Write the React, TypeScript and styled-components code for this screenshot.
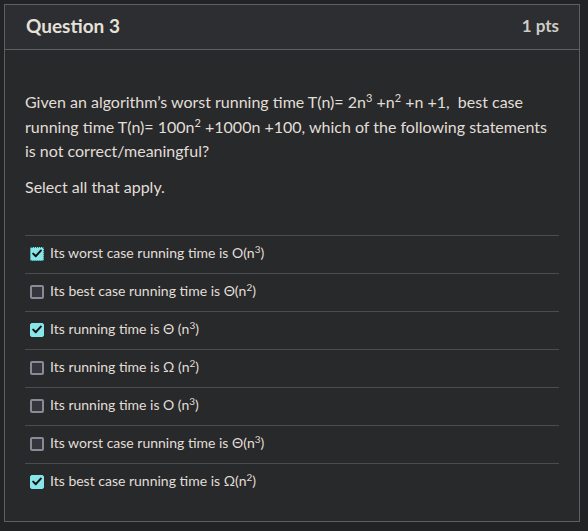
import React from "react";
import styled, { createGlobalStyle } from "styled-components";

const Global = createGlobalStyle`
  html, body { margin: 0; padding: 0; background: #222325; }
  body { font-family: Lato, "Open Sans", sans-serif; color: #e1ded7; }
  * { box-sizing: border-box; }
`;

const Page = styled.div`
  padding: 4px 8px 9px 4px;
  width: 588px;
  height: 531px;
`;

const Card = styled.section`
  width: 576px;
  border: 1px solid #5e5f62;
  background: #28292b;
`;

const Header = styled.header`
  height: 45px;
  display: flex;
  align-items: center;
  justify-content: space-between;
  padding: 0 20px 3px 21px;
  background: #2d2e31;
  border-bottom: 1px solid #5e5f62;
`;

const Title = styled.h2`
  margin: 0;
  font-size: 19px;
  font-weight: 700;
  color: #e4e1da;
`;

const Points = styled.span`
  font-size: 17px;
  font-weight: 700;
  color: #cfccc5;
`;

const Body = styled.div`
  padding: 40px 20px 20px 20px;
`;

const Para = styled.p<{ $gap?: number }>`
  margin: 0 0 ${(p) => p.$gap ?? 0}px 0;
  font-size: 16px;
  line-height: 24.5px;
`;

const Sup = styled.sup<{ $small?: boolean }>`
  font-size: ${(p) => (p.$small ? 10 : 11)}px;
  line-height: 0;
  vertical-align: ${(p) => (p.$small ? 5 : 6)}px;
`;

const List = styled.div`
  display: flex;
  flex-direction: column;
`;

const Row = styled.label`
  height: 38px;
  display: flex;
  align-items: center;
  gap: 6px;
  padding: 0 0 2px 5px;
  border-top: 1px solid #4c4d50;
`;

const Box = styled.span<{ $checked: boolean; $focus?: boolean }>`
  width: 14px;
  height: 14px;
  border-radius: 2px;
  display: flex;
  align-items: center;
  justify-content: center;
  flex: none;
  background: ${(p) => (p.$checked ? "#86e6e9" : "#35363d")};
  border: ${(p) =>
    p.$checked
      ? p.$focus
        ? "1px dotted #2a6c70"
        : "1px solid #86e6e9"
      : "2px solid #8a8a96"};
`;

const AnswerText = styled.span`
  font-size: 14px;
  color: #e1ded7;
  margin-bottom: 2px;
`;

const Check = () => (
  <svg width="10" height="9" viewBox="0 0 10 9">
    <path d="M1.2 4.6 L3.8 7.2 L8.8 1.6" fill="none" stroke="#111" strokeWidth="2" strokeLinecap="round" strokeLinejoin="round" />
  </svg>
);

type Answer = { pre: string; sup: string; post: string; checked: boolean; focus?: boolean };

const answers: Answer[] = [
  { pre: "Its worst case running time is O(n", sup: "3", post: ")", checked: true, focus: true },
  { pre: "Its best case running time is \u0398(n", sup: "2", post: ")", checked: false },
  { pre: "Its running time is \u0398 (n", sup: "3", post: ")", checked: true },
  { pre: "Its running time is \u03A9 (n", sup: "2", post: ")", checked: false },
  { pre: "Its running time is O (n", sup: "3", post: ")", checked: false },
  { pre: "Its worst case running time is \u0398(n", sup: "3", post: ")", checked: false },
  { pre: "Its best case running time is \u03A9(n", sup: "2", post: ")", checked: true },
];

const Spacer = styled.div`
  height: 36px;
`;

export default function App() {
  return (
    <Page>
      <Global />
      <Card>
        <Header>
          <Title>Question 3</Title>
          <Points>1 pts</Points>
        </Header>
        <Body>
          <Para $gap={11}>
            Given an algorithm’s worst running time T(n)= 2n<Sup>3</Sup> +n<Sup>2</Sup> +n +1,&nbsp; best case
            running time T(n)= 100n<Sup>2</Sup> +1000n +100, which of the following statements is not
            correct/meaningful?
          </Para>
          <Para>Select all that apply.</Para>
          <Spacer />
          <List>
            {answers.map((a, i) => (
              <Row key={i}>
                <Box $checked={a.checked} $focus={a.focus}>
                  {a.checked && <Check />}
                </Box>
                <AnswerText>
                  {a.pre}
                  <Sup $small>{a.sup}</Sup>
                  {a.post}
                </AnswerText>
              </Row>
            ))}
          </List>
        </Body>
      </Card>
    </Page>
  );
}
